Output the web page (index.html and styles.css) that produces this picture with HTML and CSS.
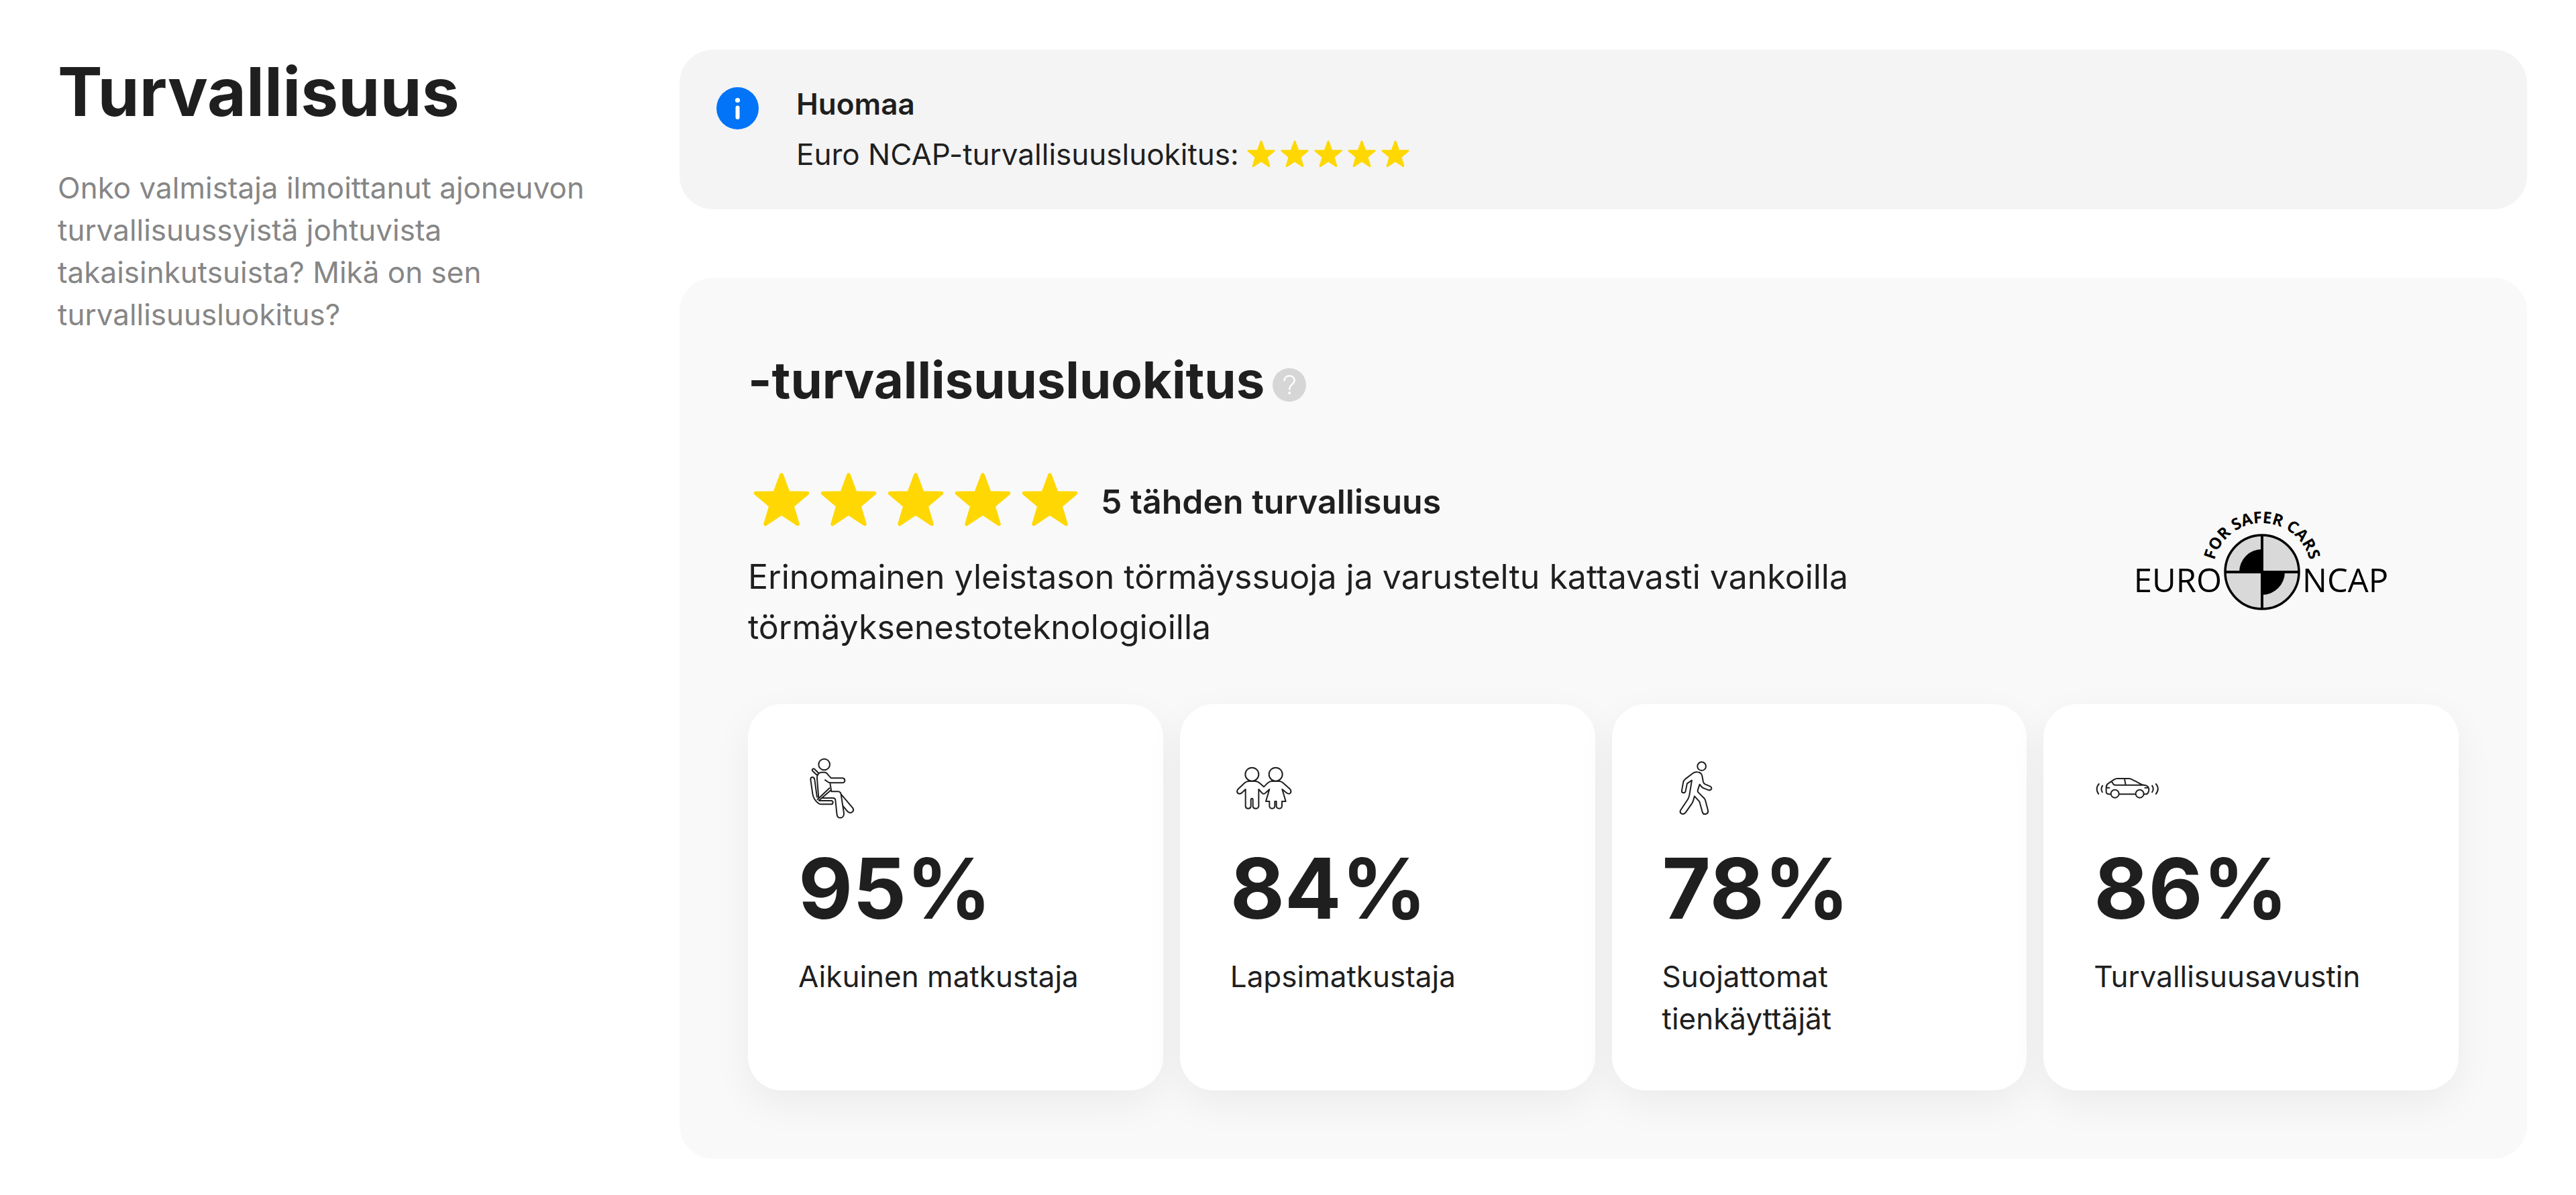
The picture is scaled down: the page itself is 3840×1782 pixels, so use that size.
FILE: index.html
```
<!DOCTYPE html>
<html lang="fi">
<head>
<meta charset="utf-8">
<meta name="viewport" content="width=device-width, initial-scale=1">
<title>Turvallisuus</title>
<link rel="stylesheet" href="styles.css">
</head>
<body>
<svg class="sprite" aria-hidden="true">
  <symbol id="star" viewBox="0 0 100 100">
    <path d="M50 10 60 37 88.500 37.500 66 56.500 74 83.500 50 67.500 26 83.500 34 56.500 11.500 37.500 40 37Z" fill="#ffd803" stroke="#ffd803" stroke-width="5.500" stroke-linejoin="round"/>
  </symbol>
</svg>
<section class="safety">
  <header class="intro">
    <h1 class="intro-title">Turvallisuus</h1>
    <p class="intro-text">Onko valmistaja ilmoittanut ajoneuvon turvallisuussyistä johtuvista takaisinkutsuista? Mikä on sen turvallisuusluokitus?</p>
  </header>
  <main class="content">
    <aside class="notice">
      <svg class="notice-icon" viewBox="0 0 63 63" aria-hidden="true">
        <circle cx="31.500" cy="31.500" r="31.500" fill="#0274f8"/>
        <circle cx="31.500" cy="19.500" r="3.600" fill="#fff"/>
        <path d="M31.500 30.500V45" stroke="#fff" stroke-width="6" stroke-linecap="round"/>
      </svg>
      <div class="notice-body">
        <strong class="notice-title">Huomaa</strong>
        <div class="notice-line">
          <span>Euro NCAP-turvallisuusluokitus:</span>
          <span class="stars" role="img" aria-label="5 tähteä">
            <svg class="star-small"><use href="#star"/></svg><svg class="star-small"><use href="#star"/></svg><svg class="star-small"><use href="#star"/></svg><svg class="star-small"><use href="#star"/></svg><svg class="star-small"><use href="#star"/></svg>
          </span>
        </div>
      </div>
    </aside>
    <section class="panel">
      <div class="panel-head">
        <h2 class="panel-title">-turvallisuusluokitus</h2>
        <button class="help" type="button" aria-label="Lisätietoja">
          <svg class="help-icon" viewBox="0 0 50 50" aria-hidden="true">
            <circle cx="25" cy="25" r="25" fill="#d6d6d6"/>
            <path d="M17.500 18.500C17.800 14 21 11.500 25.200 11.500 29.500 11.500 32.700 14.300 32.700 18.200 32.700 24 25.200 24 25.200 31.500" fill="none" stroke="#fff" stroke-width="2.400" stroke-linecap="round"/>
            <circle cx="25.200" cy="37" r="2" fill="#fff"/>
          </svg>
        </button>
      </div>
      <div class="summary">
        <div class="summary-main">
          <div class="rating">
            <span class="stars" role="img" aria-label="5 tähteä">
              <svg class="star-large"><use href="#star"/></svg><svg class="star-large"><use href="#star"/></svg><svg class="star-large"><use href="#star"/></svg><svg class="star-large"><use href="#star"/></svg><svg class="star-large"><use href="#star"/></svg>
            </span>
            <strong class="rating-label">5 tähden turvallisuus</strong>
          </div>
          <p class="summary-text">Erinomainen yleistason törmäyssuoja ja varusteltu kattavasti vankoilla törmäyksenestoteknologioilla</p>
        </div>
        <svg class="ncap" viewBox="0 -6 400 160" role="img" aria-label="Euro NCAP">
          <defs><path id="ncap-arc" d="M129 91A73 73 0 0 1 275 91"/></defs>
          <circle cx="202" cy="91" r="55" fill="#d9d9d9"/>
          <path d="M202 91V57A34 34 0 0 0 168 91ZM202 91V125A34 34 0 0 0 236 91Z"/>
          <path d="M202 36V146M147 91H257" stroke="#000" stroke-width="4"/>
          <circle cx="202" cy="91" r="55" fill="none" stroke="#000" stroke-width="3.500"/>
          <text class="ncap-word" x="142" y="121" text-anchor="end">EURO</text>
          <text class="ncap-word" x="262" y="121">NCAP</text>
          <text class="ncap-motto" text-anchor="middle"><textPath href="#ncap-arc" startOffset="50%">FOR SAFER CARS</textPath></text>
        </svg>
      </div>
      <ul class="cards">
        <li class="card">
          <svg class="card-icon" viewBox="33 39 300 300" aria-hidden="true">
            <circle cx="149" cy="84" r="25"/>
            <path d="M117 132 97 113Q93 108 97 105 101 101 106 105L124 123"/>
            <path d="M117 232 106 151Q104 141 96 141 88 141 88 151L97 215Q101 243 125 259 130 262 139 262H179Q188 262 188 254 188 246 179 246H124"/>
            <path d="M124 235 117 146Q116 122 136 119L151 119Q159 119 166 130L180 145H230Q241 146 241 155 241 165 230 166H178Q170 166 165 162L151 152M175 166 181 205H211Q222 206 224 217L237 302Q238 318 226 322 210 326 206 310L199 243Q198 234 188 234H136"/>
            <path d="M117 242 174 188M124 246 181 197M225 218 276 278Q284 290 274 297 264 304 254 295L233 270"/>
          </svg>
          <strong class="card-value">95%</strong>
          <span class="card-label">Aikuinen matkustaja</span>
        </li>
        <li class="card">
          <svg class="card-icon" viewBox="43 9 300 300" aria-hidden="true">
            <circle cx="140" cy="98" r="30"/>
            <circle cx="246" cy="98" r="30"/>
            <path d="M111 165V241Q112 251 123 251 134 251 135 241V212Q135 206 140 206 144 206 144 212V241Q145 251 157 251 168 251 170 241V165L185 182Q193 189 201 181L218 165 202 219H218V240Q219 251 230 251 241 251 242 240V219H249V240Q250 251 262 251 273 251 274 240V219H291L275 165 296 182Q306 188 312 182 317 175 311 165L280 137Q271 129 262 129H228Q219 129 210 137L193 154 176 139Q166 129 155 129H126Q115 129 106 137L77 165Q70 174 76 182 84 188 93 182Z"/>
          </svg>
          <strong class="card-value">84%</strong>
          <span class="card-label">Lapsimatkustaja</span>
        </li>
        <li class="card">
          <svg class="card-icon" viewBox="-6 9 300 300" aria-hidden="true">
            <circle cx="170" cy="62" r="19"/>
            <path d="M126 125 115 191Q113 201 108 210L76 258Q70 268 80 274 91 279 98 269L126 229Q131 222 133 213L138 196 160 220 173 266Q176 278 188 276 201 273 198 259L186 213Q184 208 180 204L154 178Q151 174 153 167L161 143 168 152Q171 156 176 159L202 169Q211 170 214 163 215 155 208 152L185 142Q179 139 177 132L172 105Q168 89 151 88 140 86 131 93L97 119Q89 126 88 132L81 170Q80 180 88 181 96 181 98 173L105 139Z"/>
          </svg>
          <strong class="card-value">78%</strong>
          <span class="card-label">Suojattomat tienkäyttäjät</span>
        </li>
        <li class="card">
          <svg class="card-icon" viewBox="65 -21 300 300" aria-hidden="true">
            <circle cx="160" cy="155" r="18"/>
            <circle cx="271" cy="155" r="18"/>
            <path d="M178 157H253M289 157H299Q311 155 312 136 312 122 299 118L280 114Q250 98 232 89 228 87 222 87H170Q163 87 157 91L130 109Q121 115 121 127V148Q123 157 133 157H142M144 97 151 109Q154 116 162 116H292M203 88 208 115M122 128H138M292 128H308"/>
            <path d="M90 109Q69 132 88 158M106 117Q93 132 105 150M325 117Q338 132 325 150M342 109Q363 132 342 158"/>
          </svg>
          <strong class="card-value">86%</strong>
          <span class="card-label">Turvallisuusavustin</span>
        </li>
      </ul>
    </section>
  </main>
</section>
</body>
</html>
```
FILE: styles.css
```
* { box-sizing: border-box; }

body {
  margin: 0;
  background: #fff;
  color: #1f1f1f;
  font-family: Inter, "Liberation Sans", sans-serif;
  font-size: 44px;
  line-height: 63px;
}

h1, h2, p, ul { margin: 0; padding: 0; }
ul { list-style: none; }
svg { display: block; flex: none; }
.sprite { position: absolute; width: 0; height: 0; }

.safety {
  display: grid;
  grid-template-columns: minmax(0, 1fr) minmax(0, 3fr);
  column-gap: 9px;
  align-items: start;
  padding: 74px 73px 54px 86px;
}

.intro { padding-right: 48px; }
.intro-title { margin-bottom: 50px; font-size: 100px; font-weight: 700; line-height: 125px; }
.intro-text { color: #868686; }

.content { display: flex; flex-direction: column; gap: 102px; }

.notice {
  display: flex;
  gap: 56px;
  padding: 44px 55px;
  border-radius: 50px;
  background: #f4f4f4;
  line-height: 75px;
}
.notice-icon { width: 63px; height: 63px; margin-top: 12px; }
.notice-title { display: block; font-weight: 600; }
.notice-line { display: flex; align-items: center; gap: 8px; }

.stars { display: flex; }
.star-small { width: 50px; height: 50px; }
.star-large { width: 100px; height: 100px; }

.panel { padding: 102px; border-radius: 50px; background: #f9f9f9; }
.panel-head { display: flex; align-items: center; gap: 12px; }
.panel-title { font-size: 76px; font-weight: 700; line-height: 100px; }
.help { margin: 16px 0 0; padding: 0; border: 0; background: none; cursor: pointer; }
.help-icon { width: 50px; height: 50px; }

.summary { display: flex; align-items: center; justify-content: space-between; margin-top: 82px; }
.summary-main { max-width: 1730px; }
.rating { display: flex; align-items: center; gap: 26px; font-size: 50px; line-height: 75px; }
.rating-label { font-weight: 600; }
.summary-text { margin-top: 25px; font-size: 50px; line-height: 75px; }
.ncap { width: 400px; height: 160px; margin-right: 95px; overflow: visible; }
.ncap-word { font: 400 49px "Open Sans", sans-serif; }
.ncap-motto { font: 700 24px "Open Sans", sans-serif; }

.cards {
  display: grid;
  grid-template-columns: repeat(4, minmax(0, 1fr));
  gap: 25px;
  margin-top: 77px;
}
.card {
  display: flex;
  flex-direction: column;
  gap: 25px;
  padding: 75px;
  border-radius: 50px;
  background: #fff;
  box-shadow: 0 20px 60px rgba(0, 0, 0, 0.06);
}
.card-icon { width: 100px; height: 100px; fill: none; stroke: #1f1f1f; stroke-width: 6; stroke-linejoin: round; }
.card-value { font-size: 125px; font-weight: 700; line-height: 150px; }
```
